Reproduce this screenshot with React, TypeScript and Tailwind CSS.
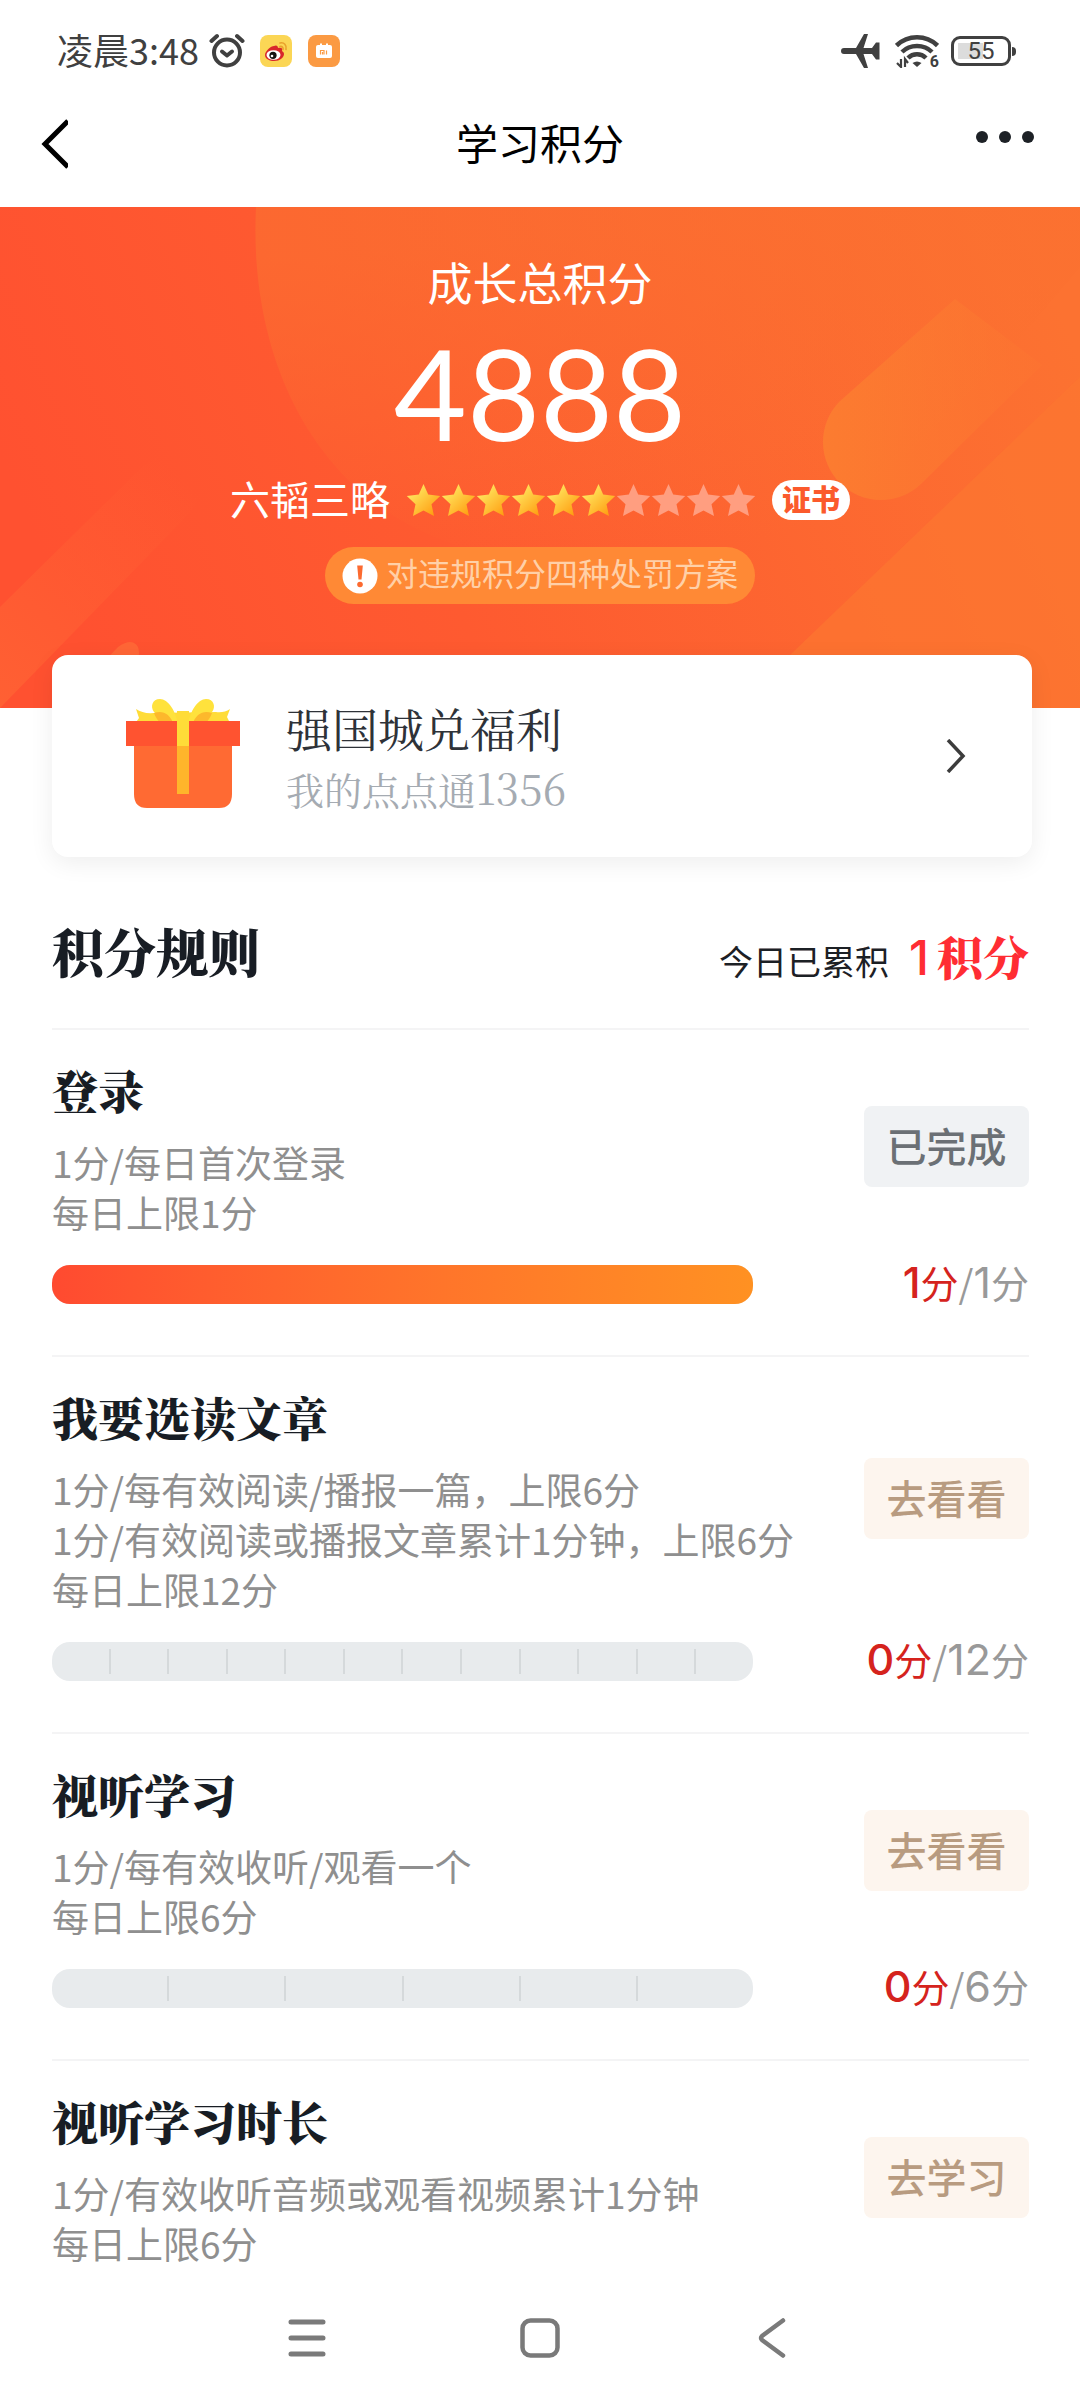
import React from 'react';

interface Task {
  id: string;
  title: string;
  lines: string[];
  action: string;
  done: boolean;
  score?: { current: number; max: number };
}

const TASKS: Task[] = [
  {
    id: 'login',
    title: '登录',
    lines: ['1分/每日首次登录', '每日上限1分'],
    action: '已完成',
    done: true,
    score: { current: 1, max: 1 },
  },
  {
    id: 'article',
    title: '我要选读文章',
    lines: ['1分/每有效阅读/播报一篇，上限6分', '1分/有效阅读或播报文章累计1分钟，上限6分', '每日上限12分'],
    action: '去看看',
    done: false,
    score: { current: 0, max: 12 },
  },
  {
    id: 'video',
    title: '视听学习',
    lines: ['1分/每有效收听/观看一个', '每日上限6分'],
    action: '去看看',
    done: false,
    score: { current: 0, max: 6 },
  },
  {
    id: 'duration',
    title: '视听学习时长',
    lines: ['1分/有效收听音频或观看视频累计1分钟', '每日上限6分'],
    action: '去学习',
    done: false,
  },
];

const SERIF = "font-['Noto_Serif_CJK_SC','Noto_Serif_SC','Liberation_Serif','Noto_Sans_CJK_SC',serif]";

const StatusBar = () => (
  <div className="flex h-[102px] items-center justify-between pr-16 pl-[57px] text-[#404040]">
    <div className="flex items-center">
      <span className="pb-1 text-[36px] leading-none">凌晨3:48</span>
      {/* Alarm */}
      <svg className="ml-[10px] h-9 w-9" viewBox="0 0 36 36" fill="none" stroke="currentColor" strokeWidth="4" strokeLinecap="round">
        <circle cx="18" cy="19.5" r="13" />
        <path d="M2.5 8 8 3M33.5 8 28 3" />
        <path d="m13 18.500 5 4 5-4" strokeLinejoin="round" />
      </svg>
      {/* Weibo */}
      <svg className="ml-[15px] h-8 w-8" viewBox="0 0 32 32">
        <rect width="32" height="32" rx="8" fill="#fbd655" />
        <path d="M14 11c-3 0-9 5-9 9 0 4 5 6 9 6 6 0 10-3.500 10-7 0-2-1.500-2.500-2-3 1-3-1-4-4-3 0-2-1.500-3.500-4-2z" fill="#d8282b" />
        <ellipse cx="13.500" cy="20" rx="7" ry="4.800" fill="#fff" />
        <circle cx="13" cy="20.300" r="3.600" fill="#161311" />
        <circle cx="12" cy="21" r="1.300" fill="#fff" />
        <path d="M20 8c4-1 7 2 6 6.500M20 11.500c2-.5 3.500 1 3 3" fill="none" stroke="#e9a12c" strokeWidth="1.600" strokeLinecap="round" />
      </svg>
      {/* Mi store */}
      <svg className="ml-4 h-8 w-8" viewBox="0 0 32 32">
        <rect width="32" height="32" rx="8" fill="#fb9a43" />
        <rect x="8" y="10" width="16" height="13" rx="2" fill="#fff" />
        <path d="M13 10V8.500M19 10V8.500" stroke="#fff" strokeWidth="2" />
        <path d="M12.500 19.500v-4h3.500v4M14.500 17v2.500M18.500 15.500v4" fill="none" stroke="#fb9a43" strokeWidth="1.200" />
      </svg>
    </div>

    <div className="flex items-center">
      {/* Airplane mode */}
      <svg className="h-[34px] w-[39px]" viewBox="0 0 39 34" fill="currentColor">
        <path d="M3 14h12L23 0h4l-4.500 14H31l4-5.500h3.500V25.500H35L31 20h-8.500L27 34h-4L15 20H3a3 3 0 0 1 0-6z" />
      </svg>
      {/* Wifi */}
      <div className="relative ml-[15px]">
        <svg className="h-[34px] w-11" viewBox="0 0 44 34" fill="none" stroke="currentColor" strokeWidth="4.500">
          <path d="M1.500 11.500C13 .5 31 .5 42.500 11.500M7 18c8-8 22-8 30 0M13 24c5-5 13-5 18 0" />
          <path d="m17.500 29 4.500 4 4.500-4q-4.500-3-9 0z" fill="currentColor" stroke="none" />
          <path d="M6 25v8l-4-4M10 33v-8l3 4" strokeWidth="2.200" />
        </svg>
        <span className="absolute right-0 -bottom-1 font-[Roboto] text-[16px] leading-5 font-bold">6</span>
      </div>
      {/* Battery */}
      <div className="ml-3 flex items-center">
        <div className="flex h-[30px] w-[60px] rounded-[9px] border-3 border-current p-1">
          <div className="flex w-full items-center justify-center bg-linear-to-r from-[#dcdcdc] from-55% to-white to-55% font-[Roboto] text-[24px] leading-none">
            55
          </div>
        </div>
        <div className="ml-px h-[9px] w-[4px] rounded-r-sm bg-current" />
      </div>
    </div>
  </div>
);

const NavHeader = () => (
  <header className="grid grid-cols-3 items-center px-10 pb-[21px]">
    <button aria-label="返回" className="flex h-[84px] w-16 items-center text-black">
      <svg className="h-[50px] w-7" viewBox="0 0 28 50" fill="none" stroke="currentColor" strokeWidth="5">
        <path d="M28 2 5 25l23 23" />
      </svg>
    </button>
    <h1 className="pb-1 text-center text-[42px] leading-[80px] text-black">学习积分</h1>
    <button aria-label="更多" className="flex h-[84px] items-center justify-end text-[#1d2126]">
      <svg className="h-7 w-[64px]" viewBox="0 0 64 28" fill="currentColor">
        <circle cx="6" cy="7" r="6" />
        <circle cx="29" cy="7" r="6" />
        <circle cx="52" cy="7" r="6" />
      </svg>
    </button>
  </header>
);

const HeroBackground = () => (
  <svg className="absolute inset-0 h-full w-full" viewBox="0 0 1080 501" preserveAspectRatio="none" aria-hidden="true">
    <defs>
      <linearGradient id="hero-base" x1="0" y1="0.500" x2="1" y2="0.300">
        <stop offset="0" stopColor="#ff5130" />
        <stop offset="0.350" stopColor="#fe5a30" />
        <stop offset="1" stopColor="#fc7231" />
      </linearGradient>
      <linearGradient id="hero-circle" x1="0.300" y1="0.100" x2="0.450" y2="0.950">
        <stop offset="0" stopColor="#fb7030" stopOpacity="0.650" />
        <stop offset="1" stopColor="#fb7030" stopOpacity="0" />
      </linearGradient>
      <linearGradient id="hero-capsule" x1="0" y1="0" x2="1" y2="0">
        <stop offset="0" stopColor="#fc7c30" />
        <stop offset="1" stopColor="#fc7a30" stopOpacity="0.200" />
      </linearGradient>
      <linearGradient id="hero-left" x1="0" y1="1" x2="0.700" y2="0">
        <stop offset="0" stopColor="#ff6a35" stopOpacity="0.600" />
        <stop offset="1" stopColor="#ff6a35" stopOpacity="0" />
      </linearGradient>
    </defs>
    <rect width="1080" height="501" fill="url(#hero-base)" />
    <path d="M256 0C250 120 290 235 380 300c75 52 165 62 260 60 180-10 300-130 440-300V0z" fill="url(#hero-circle)" />
    <path d="M1080 170 790 448v53h290z" fill="#fc7630" fillOpacity="0.700" />
    <path d="M839 195 955 92l87 66-121 119a58 58 0 0 1-82-82z" fill="url(#hero-capsule)" />
    <path d="M0 400 140 262q45-38 64-14 16 26-22 66L0 501z" fill="url(#hero-left)" />
    <path d="M60 501 118 440q14-10 20 0 4 12-8 24L92 501z" fill="#ff7a3c" fillOpacity="0.500" />
  </svg>
);

const Star = ({ filled }: { filled: boolean }) => (
  <svg className="h-[34px] w-[35px]" viewBox="0 0 35 34">
    <path
      d="m17.500 1 4.700 10.500 12 1.400-8.700 8.300 2.500 11.800-10.500-5.500L7 33l2.500-11.800L.8 12.900l12-1.400z"
      fill={filled ? 'url(#star-gold)' : '#ff9e80'}
    />
  </svg>
);

const Hero = () => (
  <section className="relative bg-[#fd6430] pt-[45px] pb-[104px] text-white">
    <HeroBackground />
    <svg className="absolute h-0 w-0" aria-hidden="true">
      <defs>
        <linearGradient id="star-gold" x1="0" y1="0" x2="1" y2="1">
          <stop offset="0.200" stopColor="#ffe45c" />
          <stop offset="0.900" stopColor="#ff9c10" />
        </linearGradient>
      </defs>
    </svg>
    <div className="relative flex flex-col items-center">
      <h2 className="text-[45px] leading-[60px]">成长总积分</h2>
      <p className="mt-[17px] font-[Lato] text-[126px] leading-[128px]">4888</p>

      <div className="mt-[23px] flex h-10 items-center">
        <span className="pb-1 text-[40px] leading-none">六韬三略</span>
        <div className="ml-4 flex">
          {Array.from({ length: 10 }, (_, i) => (
            <Star key={i} filled={i < 6} />
          ))}
        </div>
        <button className="ml-4 h-10 rounded-[20px] bg-white px-[10px] pb-1 text-[29px] leading-none font-black text-[#fb5a2c]">
          证书
        </button>
      </div>

      <button className="mt-[27px] flex h-[57px] items-center rounded-full bg-[#ff8935] px-[17px] text-[#ffd0a8]">
        <svg className="h-9 w-9" viewBox="0 0 36 36">
          <circle cx="18" cy="18" r="17.500" fill="#fff" />
          <path d="M15.200 7.500h5.600l-1.300 14h-3z" fill="#fc6a30" />
          <circle cx="18" cy="26.500" r="2.800" fill="#fc6a30" />
        </svg>
        <span className="ml-2 pb-2 text-[32px] leading-none">对违规积分四种处罚方案</span>
      </button>
    </div>
  </section>
);

const GiftIcon = () => (
  <svg className="mb-1 h-[110px] w-[114px]" viewBox="0 0 114 110">
    <path d="M10 10q7 5 18 4l62-1q8 1 14-3l-3 8 4 8H8l5-7z" fill="#ffdc38" />
    <path d="M52 26C50 12 42 0 34 0c-8 0-10 8-6 13 5 6 15 6 20 13zM62 26C64 12 72 0 80 0c8 0 10 8 6 13-5 6-15 6-20 13z" fill="#ffe23c" />
    <path d="M28 14c8-3 16 0 20 12H36q-6-6-8-12zM86 14c-8-3-16 0-20 12h12q6-6 8-12z" fill="#fdb82c" />
    <path d="M8 46h98v49q0 14-13 14H21Q8 109 8 95z" fill="#ff6a33" />
    <path d="M0 22h114v25H0z" fill="#ff5330" />
    <path d="M51 12h12v35H51z" fill="#ffdc38" />
    <path d="M51 47h12v48H51z" fill="#ffb52b" />
  </svg>
);

const BenefitCard = () => (
  <a
    href="#benefits"
    className="relative mr-12 ml-[52px] -mt-[53px] flex h-[202px] items-center rounded-2xl bg-white pr-[66px] pl-[74px] shadow-[0_6px_24px_rgba(0,0,0,0.07)]"
  >
    <GiftIcon />
    <div className={`ml-[46px] flex-1 pt-1 ${SERIF}`}>
      <p className="text-[46px] leading-[60px] text-[#2e3238]">强国城兑福利</p>
      <p className="text-[38px] leading-[60px] text-[#a5abb2]">
        我的点点通<span className="text-[42px]">1356</span>
      </p>
    </div>
    <svg className="h-[34px] w-5" viewBox="0 0 20 34" fill="none" stroke="#3c3c3c" strokeWidth="3.500">
      <path d="m2 1 15 16L2 33" />
    </svg>
  </a>
);

const ProgressBar = ({ current, max }: { current: number; max: number }) => (
  <div
    role="progressbar"
    aria-valuenow={current}
    aria-valuemax={max}
    className="relative flex h-[39px] flex-1 overflow-hidden rounded-[18px] bg-[#e8ebed]"
  >
    <div
      className="absolute inset-y-0 left-0 bg-linear-to-r from-[#ff4a30] to-[#ff9122]"
      style={{ width: `${(current / max) * 100}%` }}
    />
    {Array.from({ length: max }, (_, i) => (
      <span key={i} className="my-[7px] flex-1 border-r-2 border-[#d5d9db] last:border-r-0" />
    ))}
  </div>
);

const TaskItem = ({ task }: { task: Task }) => (
  <li className="border-b-2 border-[#f4f4f5] pt-[26px] last:border-b-0">
    <div className="flex items-center justify-between">
      <div>
        <h3 className={`text-[46px] leading-[66px] font-black text-[#181d24] ${SERIF}`}>{task.title}</h3>
        <div className="mt-[15px] text-[37px] leading-[50px] text-[#8f8f8f]">
          {task.lines.map(line => (
            <p key={line}>{line}</p>
          ))}
        </div>
      </div>
      <button
        disabled={task.done}
        className={`h-[81px] w-[165px] shrink-0 rounded-lg pb-1 text-[40px] leading-none font-medium ${
          task.done ? 'bg-[#f0f2f4] text-[#6b7075]' : 'bg-[#fdf5ee] text-[#b89b80]'
        }`}
      >
        {task.action}
      </button>
    </div>
    {task.score && (
      <div className="mt-[27px] flex items-center pb-[51px]">
        <ProgressBar current={task.score.current} max={task.score.max} />
        <p className="flex w-[276px] items-baseline justify-end pb-1 text-[38px] leading-[35px] text-[#999]">
          <span className="font-[Inter] text-[43px] font-medium text-[#d5231d]">{task.score.current}</span>
          <span className="text-[#d5231d]">分</span>
          <span>/</span>
          <span className="font-[Inter] text-[43px]">{task.score.max}</span>
          <span>分</span>
        </p>
      </div>
    )}
  </li>
);

const SystemNav = () => (
  <nav className="mt-auto flex h-[124px] items-center justify-center gap-[193px] text-[#7a7a7a]">
    <button aria-label="菜单">
      <svg className="h-10 w-10" viewBox="0 0 40 40" stroke="currentColor" strokeWidth="5" strokeLinecap="round">
        <path d="M4 4h32M4 20h32M4 36h32" />
      </svg>
    </button>
    <button aria-label="主屏幕">
      <svg className="h-10 w-10" viewBox="0 0 40 40" fill="none" stroke="currentColor" strokeWidth="4.500">
        <rect x="2.500" y="2.500" width="35" height="35" rx="8" />
      </svg>
    </button>
    <button aria-label="后退">
      <svg className="h-10 w-10" viewBox="0 0 40 40" fill="none" stroke="currentColor" strokeWidth="4.500" strokeLinecap="round" strokeLinejoin="round">
        <path d="M30 2.500 9 18q-2 2 0 4l21 15.500" />
      </svg>
    </button>
  </nav>
);

export default function App() {
  return (
    <div className="flex min-h-screen flex-col bg-white font-['Noto_Sans_CJK_SC',sans-serif]">
      <StatusBar />
      <NavHeader />
      <Hero />
      <BenefitCard />

      {/* Rules */}
      <main className="pt-[59px] pr-[51px] pl-[52px]">
        <div className="flex items-center justify-between border-b-2 border-[#f4f4f5] pb-[42px]">
          <h2 className={`text-[52px] leading-[70px] font-black text-[#181d24] ${SERIF}`}>积分规则</h2>
          <p className="flex h-[70px] items-baseline pt-1 text-[34px] text-[#1c2025]">
            今日已累积
            <span className="ml-5 font-[Inter] text-[48px] leading-[70px] font-medium text-[#ff2d33]">1</span>
            <span className={`ml-2 text-[46px] leading-[70px] font-black text-[#ff2d33] ${SERIF}`}>积分</span>
          </p>
        </div>
        <ul>
          {TASKS.map(task => (
            <TaskItem key={task.id} task={task} />
          ))}
        </ul>
      </main>

      <SystemNav />
    </div>
  );
}
